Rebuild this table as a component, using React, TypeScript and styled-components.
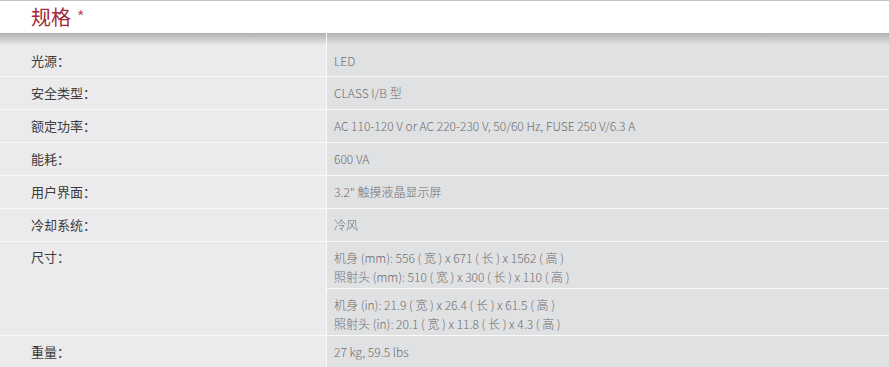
import styled, {createGlobalStyle} from 'styled-components'

const GlobalStyle = createGlobalStyle`
    html, body {
        margin: 0;
        padding: 0;
        background: #ebebed;
    }
`

const Page = styled.div`
    width: 889px;
    height: 367px;
    overflow: hidden;
    font-family: "Noto Sans CJK SC", sans-serif;
`

const Header = styled.div`
    height: 32px;
    border-top: 1px solid #c2c2c2;
    background: #fff;
    display: flex;
    align-items: center;
    padding-left: 31px;
`

const Title = styled.h2`
    margin: 0;
    font-size: 20px;
    font-weight: 400;
    color: #a3283c;
    line-height: 1;
`

const Star = styled.span`
    font-size: 16px;
    color: #bb5063;
    margin-left: 6px;
    vertical-align: 2px;
`

const Table = styled.div`
    display: grid;
    grid-template-columns: 326px 1fr;
    column-gap: 1px;
    row-gap: 1px;
    background: #fafafa;
`

const Cell = styled.div<{$value?: boolean; $first?: boolean; $tall?: boolean; $span?: number}>`
    background: ${p => p.$value ? '#e0e1e3' : '#ebebed'};
    ${p => p.$first && `background-image: linear-gradient(to bottom, #b1b1b2 0px, rgba(200,200,202,0.6) 8px, rgba(224,225,227,0) 12px);`}
    ${p => p.$span && `grid-row: span ${p.$span};`}
    box-sizing: border-box;
    min-height: ${p => p.$first ? 43 : p.$tall ? 46 : 32}px;
    padding: ${p => p.$first ? '12px' : '0'} 0 0 ${p => p.$value ? 7 : 31}px;
    display: flex;
    flex-direction: column;
    justify-content: ${p => p.$tall || p.$span ? 'flex-start' : 'center'};
    ${p => (p.$tall || p.$span) && 'padding-top: 6px;'}
    font-size: ${p => p.$value ? 12 : 13}px;
    font-weight: ${p => p.$value ? 300 : 400};
    line-height: ${p => p.$tall ? 19 : 18}px;
    color: ${p => p.$value ? '#6e6e6e' : '#3c3c3c'};
`

const rows: [string, string][] = [
    ['光源：', 'LED'],
    ['安全类型：', 'CLASS I/B 型'],
    ['额定功率：', 'AC 110-120 V or AC 220-230 V, 50/60 Hz, FUSE 250 V/6.3 A'],
    ['能耗：', '600 VA'],
    ['用户界面：', '3.2" 触摸液晶显示屏'],
    ['冷却系统：', '冷风'],
]

const App = () => {
    return (
        <Page>
            <GlobalStyle/>
            <Header>
                <Title>规格<Star>*</Star></Title>
            </Header>
            <Table>
                {rows.map(([label, value], i) => [
                    <Cell key={label} $first={i === 0}>{label}</Cell>,
                    <Cell key={label + 'v'} $value $first={i === 0}>{value}</Cell>,
                ])}
                <Cell $span={2}>尺寸：</Cell>
                <Cell $value $tall>
                    <span>机身 (mm): 556 ( 宽 ) x 671 ( 长 ) x 1562 ( 高 )</span>
                    <span>照射头 (mm): 510 ( 宽 ) x 300 ( 长 ) x 110 ( 高 )</span>
                </Cell>
                <Cell $value $tall>
                    <span>机身 (in): 21.9 ( 宽 ) x 26.4 ( 长 ) x 61.5 ( 高 )</span>
                    <span>照射头 (in): 20.1 ( 宽 ) x 11.8 ( 长 ) x 4.3 ( 高 )</span>
                </Cell>
                <Cell>重量：</Cell>
                <Cell $value>27 kg, 59.5 lbs</Cell>
            </Table>
        </Page>
    )
}

export default App
